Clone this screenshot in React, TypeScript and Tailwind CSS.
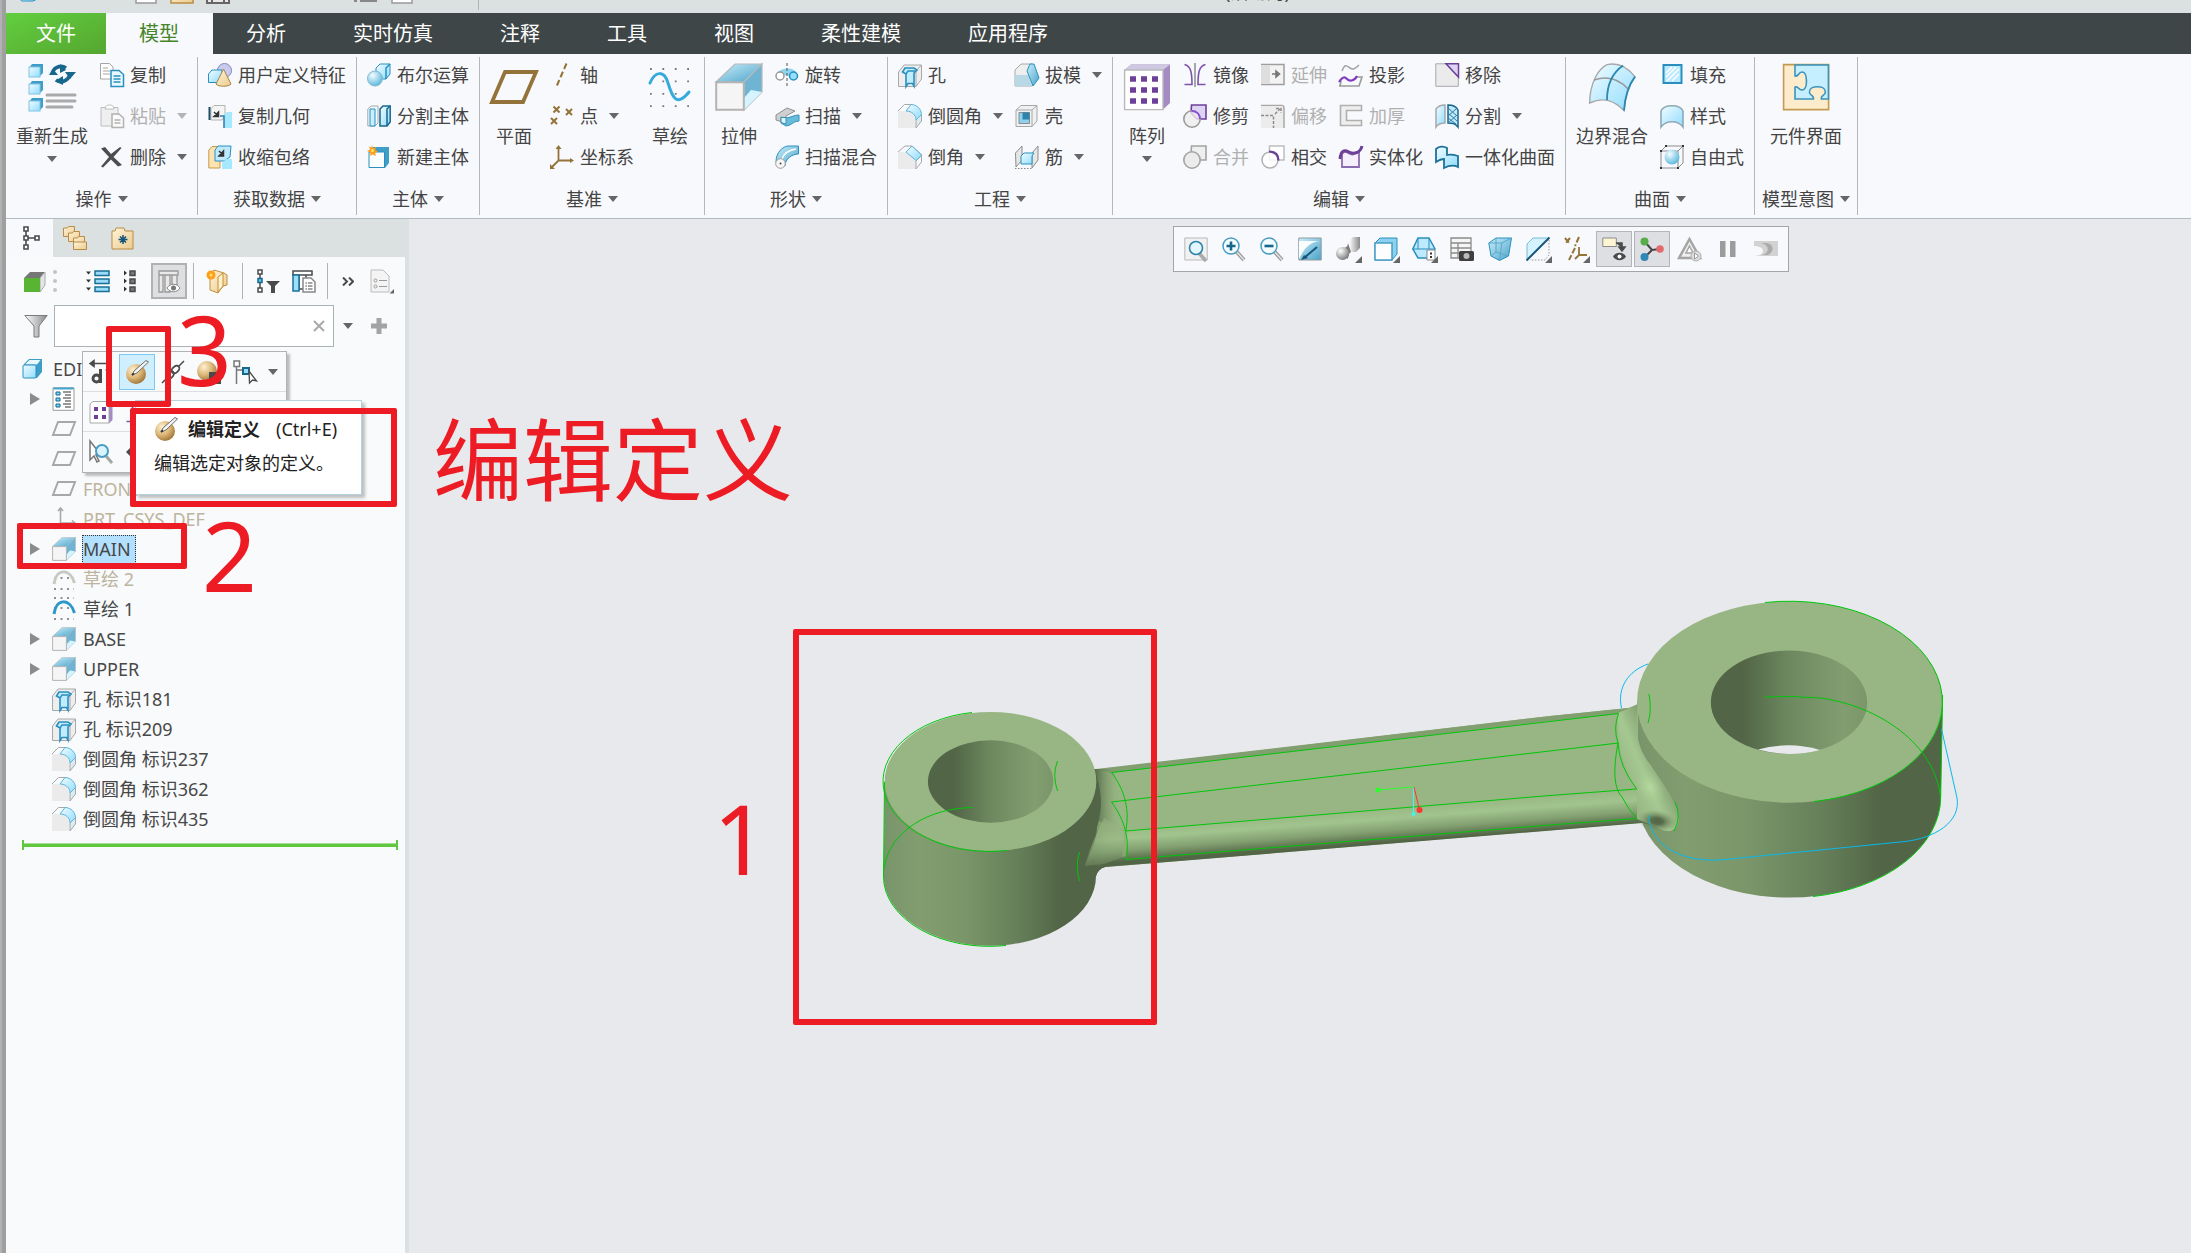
import { useState } from 'react';
import type { ReactNode } from 'react';
import { clsx } from 'clsx';

const BLUE = '#2a8fbf';
const GRAY = '#a6a8aa';
const PURPLE = '#6c3f98';
const BROWN = '#94733a';
const DARK = '#4a4a4a';

// Shared gradients, referenced by every icon on the page
function Gradients() {
  return (
    <svg className="absolute size-0" aria-hidden="true">
      <defs>
        <linearGradient id="ice" x1="0" y1="0" x2="1" y2="1">
          <stop offset="0" stopColor="#f2fcff" />
          <stop offset="1" stopColor="#8fdcff" />
        </linearGradient>
        <linearGradient id="deep" x1="0" y1="0" x2="1" y2="1">
          <stop offset="0" stopColor="#c9eefb" />
          <stop offset="1" stopColor="#4ba3c9" />
        </linearGradient>
        <radialGradient id="ball" cx="0.35" cy="0.3" r="0.8">
          <stop offset="0" stopColor="#f4fcff" />
          <stop offset="1" stopColor="#4fb2d9" />
        </radialGradient>
        <radialGradient id="gold" cx="0.35" cy="0.3" r="0.8">
          <stop offset="0" stopColor="#fff1d2" />
          <stop offset="0.5" stopColor="#dcb777" />
          <stop offset="1" stopColor="#94692a" />
        </radialGradient>
        <radialGradient id="steel" cx="0.35" cy="0.3" r="0.8">
          <stop offset="0" stopColor="#ffffff" />
          <stop offset="1" stopColor="#6f6f6f" />
        </radialGradient>
        <linearGradient id="sand" x1="0" y1="0" x2="1" y2="1">
          <stop offset="0" stopColor="#fff4d8" />
          <stop offset="1" stopColor="#ecca8e" />
        </linearGradient>
        <linearGradient id="funnel" x1="0" y1="0" x2="1" y2="0">
          <stop offset="0" stopColor="#ffffff" />
          <stop offset="1" stopColor="#8a8a8a" />
        </linearGradient>
      </defs>
    </svg>
  );
}

const extrude = (
  <>
    <path d="M.5 9.5 10 .5h13.500l-9 9z" fill="url(#deep)" stroke="#b5b9bb" strokeWidth=".6" />
    <path d="M23.500.500v14l-9 9v-14z" fill="#6fb5d3" stroke="#b5b9bb" strokeWidth=".6" />
    <path d="M23.500 14.500 14.500 23.500v-6l3.500-4z" fill="#d5f4ff" />
    <path d="M.6 9.600h13.800v13.800H.600z" fill="#f5f5f5" stroke="#b3b3b3" />
  </>
);

const hole = (
  <>
    <path d="M.5 9 6 2h17.500v14L18 23.500H.500z" fill="#eeeeee" stroke={GRAY} />
    <path d="M18 7.500v16M23.500 2 18 8" fill="none" stroke={GRAY} />
    <path d="M4.500 9 7 5h9l3 2-3 3v13l-1.500-2.500H10L8 23.500V11z" fill="#bfecff" stroke={BLUE} strokeWidth="1.600" />
    <path d="M8 11 10 8h7" fill="none" stroke={BLUE} strokeWidth="1.400" />
  </>
);

const round = (
  <>
    <path d="M0 7h8c6 0 9 5 9 9v8H0z" fill="#ebebeb" />
    <path d="M18 16v8l5.500-7v-7z" fill="#dcebf1" />
    <path d="M0 7 6.500.500H13l-5 6.500z" fill="#f7fbfd" />
    <path d="m8 7 5-6.500c6 0 10.500 5 10.500 10L18 16c0-5-4-9-10-9z" fill="url(#ice)" />
    <path d="M13 .500c6 0 10.500 5 10.500 10L18 16c0-5-4-9-10-9l5-6.500" fill="none" stroke="#5fb4d6" />
    <path d="M0 7 6.500.500H13M18 16v8l5.500-7v-7" fill="none" stroke={GRAY} />
  </>
);

const cube = (
  <>
    <path d="M4 7 9 2h13v13l-5 6H4z" fill="#3f9ec8" />
    <path d="M5 7.500 9.500 3h11L17 7.500z" fill="#e9faff" />
    <rect x="3" y="8" width="13" height="13" rx="1" fill="url(#ice)" stroke={BLUE} />
  </>
);

const sphereEdit = (
  <>
    <circle cx="11" cy="14" r="10" fill="url(#gold)" />
    <path d="M7 15 9 11 21 .500 23.500 2 12 13z" fill="#f2f2f2" stroke="#6b6b6b" />
    <path d="m7 15 2-1.500" stroke="#333" strokeWidth="2" />
  </>
);

const sketch = (color: string) => (
  <>
    <path d="M2 1h20M2 11h20M2 22h20" stroke="#8d9194" strokeWidth="2" strokeDasharray="2 4.500" />
    <path d="M2 17C4 1 18 1 22.500 16" fill="none" stroke={color} strokeWidth="3" />
  </>
);

const plane = <path d="M6 5h17l-5 13H1z" fill="none" stroke={GRAY} strokeWidth="2" />;

const magnifier = (sign: ReactNode) => (
  <>
    <path d="m14 14 8 9" stroke="#9b9b9b" strokeWidth="4" />
    <path d="m14 14 8 9" stroke="#e2e2e2" strokeWidth="1.500" />
    <circle cx="9" cy="9" r="8" fill="#f3fcff" stroke="#4a9cc3" strokeWidth="1.500" />
    {sign}
  </>
);

const corner = <path d="M26 19v7h-7z" fill="#666" />;

const ICONS: Record<string, ReactNode> = {
  regen: (
    <>
      {[1, 9.500, 18].map((y) => (
        <g key={y}>
          <path d={`M.500 ${y + 1.500} 2 ${y - 0.500}h5.500v4.500L6 ${y + 5.500}z`} fill="#3f9ec8" />
          <rect x=".500" y={y + 1} width="5.500" height="5" fill="url(#ice)" stroke="#7fc4e2" strokeWidth=".500" />
        </g>
      ))}
      <path d="M12 6a4.500 4.500 0 0 1 7-3.500M21 4.500a4.500 4.500 0 0 1-7 4" fill="none" stroke="#17678d" strokeWidth="1.800" />
      <path d="M10.500 6h4.500l-2.500-3zM18.500 4.500H24L21 8zM16 .500v4.500l3-1.500zM17.500 6.500v4.500l-4-2z" fill="#17678d" />
      <path d="M9.500 16h14M9.500 19h14M9.500 22h12.500" stroke="#a9a9a9" strokeWidth="1.500" strokeLinecap="round" />
    </>
  ),
  copy: (
    <>
      <path d="M.5.500h9L13 4v12H.500z" fill="#fff" stroke="#a5a5a5" />
      <path d="M3 5h5M3 8h7M3 11h7" stroke="#a5a5a5" />
      <path d="M11 7.500h8l4.500 4V23.500H11z" fill="#e8f8ff" stroke={BLUE} strokeWidth="1.500" />
      <path d="M13.500 13h7M13.500 16h7M13.500 19h7" stroke={BLUE} strokeWidth="1.500" />
    </>
  ),
  paste: (
    <>
      <path d="M1 3.500h17V22H1z" fill="#efefef" stroke="#bdbdbd" />
      <path d="M5 5c0-3 2-4 4.500-4S14 2 14 5z" fill="#fff" stroke="#bdbdbd" />
      <path d="M12 10h7l4.500 4v9.500H12z" fill="#fafafa" stroke="#b1b1b1" strokeWidth="1.500" />
      <path d="M14.500 16h6M14.500 19h6" stroke="#b1b1b1" strokeWidth="1.500" />
    </>
  ),
  remove: <path d="M1 3.500 5 2l6 7 9-7 1.500 1L13.500 12 22 20l-4 1.500-7-7-8 8-2-1L9 12z" fill="#4d4d4d" />,
  udf: (
    <>
      <circle cx="16.500" cy="7.500" r="7" fill="#c9cbee" stroke="#8487bb" />
      <path d="M.5 11 4 7h10v9l-3 3.500H.500z" fill="url(#ice)" stroke={BLUE} />
      <path d="M15.500 6 8 21c2 3 13 3 15 0z" fill="url(#sand)" stroke="#a88447" />
    </>
  ),
  copyGeom: (
    <>
      <path d="M3 4.500 6 1.500h11v10L14 16H3z" fill="#f4f4f4" stroke="#b5b5b5" />
      <path d="M1.500 3v13" stroke="#1e4d66" strokeWidth="2" />
      <path d="m6 8 4 4M10.500 8v4.500H6z" stroke="#333" strokeWidth="1.500" fill="#333" />
      <path d="M16 24V11l3-3h5v16z" fill="#a6e9ff" />
      <path d="M12 12h4v12" fill="none" stroke="#2a7da6" strokeWidth="1.500" />
    </>
  ),
  shrink: (
    <>
      <path d="M.8 5 4 1.500h8V23H.800z" fill="#fbe2b0" stroke="#c79a4a" />
      <path d="M7 5 10 1h13l-1 11-6 4H7z" fill="#bdeaff" stroke={BLUE} />
      <path d="m11 6 4 4M15.500 6v5H11z" stroke="#333" strokeWidth="1.500" fill="#333" />
      <path d="m14 18 4-4h6v10H14z" fill="#a6e9ff" />
    </>
  ),
  boolean: (
    <>
      <path d="M9 5 13 1h10v10l-4 5H9z" fill="url(#ice)" stroke={BLUE} />
      <path d="M19 16V5l4-4" fill="none" stroke={BLUE} strokeWidth="1.500" />
      <circle cx="8" cy="15.500" r="7.500" fill="url(#ball)" stroke="#7fb9d2" />
    </>
  ),
  splitBody: (
    <>
      <path d="M.8 5 4 2h7v17l-3 3H.800z" fill="#f1fafd" stroke={GRAY} />
      <path d="M3 22V5h5v17z" fill="#c7efff" stroke={BLUE} />
      <path d="M13 5 16 2h7.200v16L20 22h-7z" fill="url(#ice)" stroke="#17678d" strokeWidth="1.500" />
      <path d="M20 22V5l3-3" fill="none" stroke="#17678d" strokeWidth="1.500" />
    </>
  ),
  newBody: (
    <>
      <path d="M2 7 6 2h16v16l-4 5H2z" fill="#3f9ec8" />
      <path d="M2 7h15.500v15.500H2z" fill="#fafdfe" stroke={BLUE} />
      <path d="m5 0 1.200 3.300L9.500 2 8 5l3 1.500L8 8l1 3-3.500-1.500L3 11l.500-3.500L0 6l3-1.500L2 1.500l2.500 1z" fill="#ff9d1c" />
      <circle cx="5.500" cy="5.500" r="1.500" fill="#ffe46b" />
    </>
  ),
  bigPlane: <path d="M7.500 4.500h15.500l-6.500 15H1z" fill="none" stroke={BROWN} strokeWidth="1.900" />,
  axis: <path d="m16.500.500-10 23" stroke={BROWN} strokeWidth="2" strokeDasharray="6 3" />,
  points: (
    <path
      d="m3.500 2.500 6 6m0-6-6 6M16 5l6 6m0-6-6 6M1 14l6 6m0-6-6 6"
      stroke={BROWN}
      strokeWidth="2"
    />
  ),
  csys: (
    <>
      <path d="M8.500 2v13.500H22M8.500 15.500l-7 7" fill="none" stroke={BROWN} strokeWidth="1.800" />
      <path d="m5.500 4 3-4 3 4zM20 13l4 2.500-4 2.500zM0 19v5h5z" fill={BROWN} />
    </>
  ),
  bigSketch: (
    <>
      <path d="M2 3h21M2 9.200h21M2 15.400h21M2 21.600h21" stroke="#777" strokeWidth=".9" strokeDasharray=".9 5.300" />
      <path d="M2 10c2.500-6 7-6.500 9 0s4 12.500 10.500 4.500" fill="none" stroke="#36aadd" strokeWidth="1.500" strokeLinecap="round" />
    </>
  ),
  extrude,
  revolve: (
    <>
      <path d="M2 12C3 4 20 3 22 11l-5 2-10-1z" fill="#8ed4ef" />
      <path d="M12 0v24" stroke="#555" strokeDasharray="3 2" />
      <circle cx="5" cy="13" r="4" fill="#fff" stroke="#999" strokeWidth="1.500" />
      <circle cx="18.500" cy="13" r="4" fill="#93e0ff" stroke={BLUE} strokeWidth="1.500" />
    </>
  ),
  sweep: (
    <>
      <path d="M1 11 12 4l8 3-9 5v7l-10-3z" fill="#cfcfcf" stroke="#8f8f8f" />
      <path d="M6 13c7 3 11-2 18-2v6c-6 0-8 5-13 5l-5-3z" fill="#66bcdd" stroke="#3c8fb3" />
      <path d="M6 13.500h5V20l-5-1.500z" fill="#ddf5ff" stroke="#3c8fb3" />
    </>
  ),
  sweepBlend: (
    <>
      <path d="M1 17C1 7 8 1 14 1h9.500v8C17 9 10 14 10 21z" fill="url(#deep)" stroke={BLUE} />
      <path d="M7 14C9 8 14 5 21 4" fill="none" stroke="#fff" strokeWidth="1.500" />
      <circle cx="5.500" cy="18.500" r="4.800" fill="#f7f7f7" stroke="#999" />
      <circle cx="5.500" cy="18.500" r="1" fill="#444" />
    </>
  ),
  hole,
  round,
  chamfer: (
    <>
      <path d="M0 7h8l10 9v8H0z" fill="#ebebeb" />
      <path d="M0 7 7 1h7l10 9-6 6v8M23.500 10v7L18 24" fill="none" stroke={GRAY} />
      <path d="m14 1 9.500 9L18 15.500 8 7z" fill="url(#ice)" stroke="#5fb4d6" />
    </>
  ),
  draft: (
    <>
      <path d="M0 7 6 1h11l6 15-6 7H0z" fill="#eeeeee" stroke={GRAY} />
      <path d="M0 23V12h13l4 11z" fill="#b8d8e6" />
      <path d="M15 1h4l5 14-6 8L12 8z" fill="url(#deep)" stroke={BLUE} />
    </>
  ),
  shell: (
    <>
      <path d="M1 6 6 1.500h16V17l-5 5.500H1z" fill="#f0f0f0" stroke={GRAY} />
      <path d="M1 6h16v16.500M17 6l5-4.500" fill="none" stroke={GRAY} />
      <path d="M4 8.500h10.500v11H4z" fill="#8ed1ee" stroke="#8a8a8a" />
      <path d="M7.500 8.500h7v7h-7z" fill="#2c83ab" />
    </>
  ),
  rib: (
    <>
      <path d="M.5 8 7 1v14l-6 7zM17 8l6-7v14l-6 8z" fill="#e6e6e6" stroke="#8c8c8c" />
      <path d="m6 11 3-3h10l-2 3v8H6z" fill="url(#ice)" stroke={BLUE} />
      <path d="M0 23.500h17" stroke="#888" strokeDasharray="1.500 1.500" />
    </>
  ),
  pattern: (
    <>
      <path d="M.8 3.500 4 .800h19.500V20L20 23.300V3.500z" fill="#a58bc4" />
      <path d="M.8 3.500 4 .800h19.500L20 3.500z" fill="#cfc8e2" />
      <path d="M.8 3.500H20v19.800H.800z" fill="#fff" stroke="#bababa" strokeWidth=".7" />
      {[8, 13.500, 19].map((y) => (
        <path key={y} d={`M3.500 ${y}h3M9 ${y}h3M14.500 ${y}h3`} stroke={PURPLE} strokeWidth="2.800" />
      ))}
    </>
  ),
  mirror: (
    <>
      <path d="M1.500 1.500C8 3 9 10 9 21.500H1.500M22.500 1.500C16 3 15 10 15 21.500h7.500" fill="none" stroke="#7d54ac" strokeWidth="1.600" />
      <path d="M12 0v24" stroke="#8c8c8c" strokeWidth="1.500" />
    </>
  ),
  trim: (
    <>
      <path d="M8.500 1H23v14h-9l-6-6z" fill="#ddd3f5" stroke={PURPLE} strokeWidth="1.600" />
      <circle cx="9" cy="15" r="8.200" fill="#eeeeee" fillOpacity=".8" stroke="#999" strokeWidth="1.600" />
      <path d="M8.500 7c5 0 8.500 3 8.500 8" fill="none" stroke="#8b4fd0" strokeWidth="2" />
    </>
  ),
  merge: (
    <>
      <path d="M8.500 1H23v14h-7L8 9z" fill="#efefef" stroke="#a3a3a3" strokeWidth="1.600" />
      <circle cx="9" cy="15" r="8.200" fill="#ececec" stroke="#a3a3a3" strokeWidth="1.600" />
    </>
  ),
  extend: (
    <>
      <path d="M0 1.500h23V21.500H0" fill="#f3f3f3" stroke="#9e9e9e" strokeWidth="1.500" />
      <path d="M0 2h9v19H0z" fill="#dedede" />
      <path d="M11 11h7M15 8l3.500 3-3.500 3z" stroke="#777" strokeWidth="1.600" fill="#777" />
    </>
  ),
  offset: (
    <>
      <path d="M0 1.500h21q2 0 2 3V24" fill="#ececec" stroke="#a8a8a8" strokeWidth="1.500" />
      <path d="M0 2h22v22H0z" fill="#ececec" />
      <path d="M0 11.500h12.500V24M14 10l5-5M15 4.500h5V9" fill="none" stroke="#8d8d8d" strokeWidth="1.500" strokeDasharray="3 1.500" />
    </>
  ),
  intersect: (
    <>
      <path d="M8.500 1H23v14H8.500z" fill="#fff" stroke="#bdbdbd" strokeWidth="1.500" />
      <circle cx="9" cy="15" r="8" fill="#fff" fillOpacity=".8" stroke="#b0b0b0" strokeWidth="1.500" />
      <path d="M8 6.500c6 0 9.500 3 9.500 9" fill="none" stroke={PURPLE} strokeWidth="2.200" />
    </>
  ),
  project: (
    <>
      <path d="M3 8c3-8 5-5 8-3s5 1 9-3" fill="none" stroke="#a3a3a3" strokeWidth="1.600" />
      <path d="M1 23 2 18M17 14h6l-3 9H0" fill="none" stroke="#9b9b9b" strokeWidth="1.600" />
      <path d="M0 19c4-6 6-5 8-3s7 3 10-3" fill="none" stroke="#8139bf" strokeWidth="2.200" />
    </>
  ),
  thicken: (
    <path d="M1.500 1.500h21v5H7.500v10h15v5h-21z" fill="#efefef" stroke="#b0b0b0" strokeWidth="1.600" />
  ),
  solidify: (
    <>
      <path d="M3 9c4-6 8 3 12 0l5-3v16H3z" fill="#f4effa" stroke="#8b6bb0" strokeWidth="1.800" />
      <path d="M1 14C2 4 6 5 10 7s11 2 13-6" fill="none" stroke={PURPLE} strokeWidth="3" />
    </>
  ),
  removeSurf: (
    <>
      <path d="M.8.800h22.500v22.500H.800z" fill="#ebebeb" stroke={GRAY} />
      <path d="M11 .800h12.500V14z" fill="#ddd3f5" stroke={PURPLE} strokeWidth="1.500" />
    </>
  ),
  splitSurf: (
    <>
      <path d="M1 5c2-3 5-4 9-4v18c-4 0-7 1-9 4z" fill="url(#ice)" stroke={GRAY} strokeWidth="1.500" />
      <path d="M13 1c5 0 8 1 10 5v17c-3-4-6-4-10-4z" fill="#bfe9fa" stroke="#17678d" strokeWidth="1.500" />
      <path d="m13 4 9 8m-9-3 9 8m-9-3 8 6m0-15-8 7m9-1-9 8" stroke="#2a7da6" />
    </>
  ),
  unify: (
    <path
      d="M1 4c3-3 8-3 11-1v7c4-1 8 0 11 1v11c-4-2-10-1-14 1v-9c-3 0-5 1-8 3z"
      fill="url(#ice)"
      stroke="#1c7199"
      strokeWidth="1.800"
    />
  ),
  boundary: (
    <>
      <path d="M.8 20C1 10 5 3 9.500.800c5-1 10 1 14 6-3 4-5 10-5.500 17-5-5-10-7-17.200-3.800z" fill="url(#ice)" stroke={GRAY} strokeWidth=".7" />
      <path d="M3 8.500c6-2 12-1 17 4.500" fill="none" stroke="#999" strokeWidth=".8" />
      <path d="M17.500 1.200C12 5 9.500 11 9.500 18.500M23.500 6.800c-3 4-5 10-5.500 17" fill="none" stroke="#2b86b2" strokeWidth=".9" />
    </>
  ),
  fill: (
    <>
      <path d="M3.500 2h18v18h-18z" fill="#b9eaff" stroke="#2a8fbf" strokeWidth="2" />
      <path d="m6 10 6-6M6 14 16 4M7 18 19 6M12 18l7-7" stroke="#fff" strokeWidth="1.500" />
    </>
  ),
  style: (
    <path d="M1 7C4 0 20 0 23 7v16c-5-7-17-7-22 0z" fill="url(#ice)" stroke="#8fa9b5" strokeWidth="1.600" />
  ),
  freestyle: (
    <>
      <path d="M1 6 6 1h17v17l-5 5H1zM1 6h17v17M18 6l5-5" fill="none" stroke="#8c8c8c" />
      <circle cx="12" cy="12" r="7.500" fill="url(#ball)" />
      <path d="M0 5h2v2H0zM5 0h2v2H5zM22 0h2v2h-2zM17 22h2v2h-2zM0 22h2v2H0z" fill="#333" />
    </>
  ),
  puzzle: (
    <>
      <path d="M.8.800h22.500v22.500H.800z" fill="#fdeccb" stroke="#c39b50" strokeWidth=".8" />
      <path
        d="M6.500 1h16.700v17h-3.500c-.500-2 2-1.500 2-3.500 0-3.500-8-3.500-8 0 0 2 2.500 1.500 2 3.500H6.500v-6c2-.500 1.500 1.500 3.500 1.500 3 0 3-9 0-9C8 4.500 8.500 7 6.500 6.500z"
        fill="#c5efff"
        stroke="#3b93bd"
        strokeWidth=".8"
      />
    </>
  ),
  tree: (
    <path
      d="M1 1h4v4H1zM1 10h4v4H1zM1 19h4v4H1zM12 10h4v4h-4zM3 5v5M3 14v5M5 12h7"
      fill="#fff"
      stroke={DARK}
      strokeWidth="1.600"
    />
  ),
  folders: (
    <>
      {[0, 5, 10].map((d) => (
        <path key={d} d={`M${d + 0.500} ${d + 2}h4l1-1.500h6v10h-11z`} fill="url(#sand)" stroke="#b98d45" />
      ))}
      <path d="M10.500 16h13v7.500h-13z" fill="url(#sand)" stroke="#b98d45" />
    </>
  ),
  starFolder: (
    <>
      <path d="M1 5h3l1-3h8l1 3h8v18H1z" fill="url(#sand)" stroke="#b98d45" />
      <path d="M12 9v9M7.500 13.500h9M9 10.500l6 6M15 10.500l-6 6" stroke="#16567a" strokeWidth="1.500" />
    </>
  ),
  greenCube: (
    <>
      <path d="M2 9 8 3h15l-5 6z" fill="#777" />
      <path d="M18 9l5-6v13l-5 7z" fill="#e5e5e5" stroke={GRAY} />
      <path d="M2 9h16v14H2z" fill="#57b531" />
    </>
  ),
  expandAll: (
    <>
      <path d="M9 2h14v4.500H9zM9 10h14v4.500H9zM9 18h14v4.500H9z" fill="#97dcf8" stroke="#1b6f97" strokeWidth="1.500" />
      <path d="M0 2.500h5L2.500 5.500zM0 10.500h5l-2.500 3zM0 18.500h5l-2.500 3z" fill="#333" />
    </>
  ),
  collapseAll: (
    <>
      <path d="M8 2h5v4.500H8zM8 10h5v4.500H8zM8 18h5v4.500H8z" fill="#777" stroke={DARK} strokeWidth="1.500" />
      <path d="M2 1.500v5l3-2.500zM2 9.500v5L5 12zM2 17.500v5L5 20z" fill="#333" />
    </>
  ),
  columns: (
    <>
      <path d="M2 2h19v4H2zM2 6h4v17H2zM8 6h5v17H8zM15 6h5v10h-5z" fill="#e9e9e9" stroke="#999" strokeWidth="1.300" />
      <path d="M10 19c3-5 10-5 13 0-3 5-10 5-13 0z" fill="#fff" stroke="#888" />
      <circle cx="16.500" cy="19" r="2.500" fill="#777" />
    </>
  ),
  newBook: (
    <>
      <path d="M4 6 8 1l10 3 3 2v10l-4 1-5 7-8-3z" fill="url(#sand)" stroke="#c08f3c" />
      <path d="m12 8 5-4v13l-5 6z" fill="#fff1cb" stroke="#c08f3c" />
      <circle cx="5" cy="6" r="4.500" fill="#ff9d1c" />
      <circle cx="5" cy="6" r="1.500" fill="#ffe46b" />
    </>
  ),
  treeFilter: (
    <>
      <path d="M2 1h4v4H2zM2 19h4v4H2zM4 5v14" fill="#fff" stroke={DARK} strokeWidth="1.500" />
      <path d="M2 9.500h4v4H2z" fill="#62c8f2" stroke="#17678d" strokeWidth="1.500" />
      <path d="M10 12h14l-5 5v7h-4v-7z" fill={DARK} />
    </>
  ),
  treeColumns: (
    <>
      <path d="M1 2h19v4H1zM7 6h7v14H7z" fill="#fff" stroke={DARK} strokeWidth="1.500" />
      <path d="M1 6h6v16H1z" fill="#9be0fb" stroke="#1b6f97" strokeWidth="1.500" />
      <path d="M11 9h8l4 4v10H11z" fill="#fff" stroke="#888" strokeWidth="1.500" />
      <path d="M13.500 14h7M13.500 17h7M13.500 20h7" stroke={DARK} strokeDasharray="1.500 1 6 0" />
    </>
  ),
  sheet: (
    <>
      <path d="M1 1h12l6 6v16H1z" fill="#f4f4f4" stroke="#bcbcbc" />
      <circle cx="5.500" cy="11.500" r="1.500" fill="none" stroke="#999" />
      <circle cx="5.500" cy="17.500" r="1.500" fill="none" stroke="#999" />
      <path d="M9 11.500h8M9 17.500h8" stroke="#999" />
      <path d="M24 20v4.500h-4.500z" fill="#666" />
    </>
  ),
  funnel: <path d="M.8 1.500h22.400L15 12v11H10V12z" fill="url(#funnel)" stroke="#7b7b7b" />,
  cube,
  design: (
    <>
      <path d="M1 .800h21v22.500H1z" fill="#fff" stroke="#9a9a9a" />
      <path d="M1.500 1.500h20" stroke="#43a5d0" strokeWidth="2" />
      <path d="M4 5h4v3H4zM4 11h4v3H4zM4 17h4v3H4z" fill="#7fd0f2" stroke="#17678d" />
      <path d="M11 5h8M13 8h6M11 11h8M13 14h6M11 17h8M13 20h6" stroke="#777" strokeWidth="1.300" />
    </>
  ),
  plane,
  csysGray: <path d="M8.500 1v15H22M8.500 16l-6 6M6 4l2.500-3L11 4M20 13.500l3 2.500-3 2.500" fill="none" stroke={GRAY} strokeWidth="1.600" />,
  sketchGray: sketch('#c9c9c4'),
  sketchBlue: sketch('#2c97cb'),
  dim: (
    <>
      <path d="M1 3.500h22M1 3.500l4-3v6zM22 0v7" stroke={DARK} strokeWidth="1.500" fill={DARK} />
      <path d="M11.500 9v14M17 11l3.500-2v14" fill="none" stroke={DARK} strokeWidth="3" />
      <circle cx="7.500" cy="18.500" r="3.500" fill="none" stroke={DARK} strokeWidth="2.800" />
    </>
  ),
  sphereEdit,
  chain: (
    <>
      <path d="m1 23 6-6M17 7l6-6" stroke={DARK} strokeWidth="1.500" />
      <ellipse cx="9" cy="15" rx="4.500" ry="3" transform="rotate(-45 9 15)" fill="none" stroke={DARK} strokeWidth="1.800" />
      <ellipse cx="14.500" cy="9.500" rx="4.500" ry="3" transform="rotate(-45 14.500 9.500)" fill="none" stroke={DARK} strokeWidth="1.800" />
    </>
  ),
  sphereHide: (
    <>
      <circle cx="10" cy="11" r="10" fill="url(#gold)" />
      <path d="M12 12h12v12H12z" fill={DARK} />
    </>
  ),
  selectTree: (
    <>
      <path d="M1 1h5.500v5.500H1zM3.500 6.500V24M3.500 10H10" fill="#fff" stroke="#777" strokeWidth="1.500" />
      <path d="M10 8h6v6h-6z" fill="#8fdcff" stroke="#17678d" strokeWidth="2" />
      <path d="m16 11 .500 12 3-3 4 1z" fill="#fff" stroke={DARK} strokeWidth="1.300" />
    </>
  ),
  patternSmall: (
    <>
      <path d="M20 5 23.500 2v18L20 23.500z" fill="#a58bc4" />
      <path d="M1 4 4 1.500h19.500L20 4v19H1z" fill="#fff" stroke={GRAY} />
      <path d="M5 9h4M13 9h4M5 17h4M13 17h4" stroke={PURPLE} strokeWidth="4" />
    </>
  ),
  zoomSelect: (
    <>
      <path d="M1 1v19l4-4 3 6 2-1-3-6h5z" fill="#fff" stroke="#777" strokeWidth="1.500" />
      <path d="m17 16 6 7" stroke="#a5a5a5" strokeWidth="3" />
      <circle cx="13" cy="11" r="6" fill="#d9f4ff" stroke="#4a9cc3" strokeWidth="2" />
    </>
  ),
  arrowLeft: <path d="m1 12 8-8v16z" fill={DARK} />,
  refit: (
    <>
      <path d="M.8 1h22.400v22H.800z" fill="#f1f1f1" stroke="#b9b9b9" />
      <path d="m15 16 7 8" stroke="#aaa" strokeWidth="3.500" />
      <circle cx="12" cy="11" r="6.500" fill="#e4f7ff" stroke="#2c83ab" strokeWidth="1.600" />
    </>
  ),
  zoomIn: magnifier(<path d="M9 4.500v9M4.500 9h9" stroke="#17678d" strokeWidth="2.600" />),
  zoomOut: magnifier(<path d="M4.500 9h9" stroke="#17678d" strokeWidth="2.600" />),
  repaint: (
    <>
      <path d="M.8 1h22.400v22H.800z" fill="url(#deep)" stroke="#8e9a9f" />
      <path d="M1 4h21c-11 1-16 8-21 18z" fill="#fafdfe" />
      <path d="m6 21 13-11" stroke="#17567a" strokeWidth="2" />
      <path d="m3 23 3-5 4 3z" fill="#17567a" />
    </>
  ),
  shading: (
    <>
      <path d="m13 4 4-4h7v11l-4 4h-7z" fill="url(#funnel)" />
      <path d="M12 6c0 3-2 5-5 5l4 11c2-1 1-5 4-7z" fill="#7c7c7c" />
      <circle cx="6.500" cy="16.500" r="6.500" fill="url(#steel)" />
      {corner}
    </>
  ),
  displayStyle: (
    <>
      <path d="M1 6 6 1h17v16l-5 6H1z" fill="#8bd2f0" stroke={BLUE} />
      <path d="M1 6h17v17H1z" fill="#fbfdff" stroke="#4a9cc3" strokeWidth="1.500" />
      {corner}
    </>
  ),
  savedViews: (
    <>
      <path d="M6 1h11l6 11-6 9H6L.800 12z" fill="#bdeaff" stroke={BLUE} strokeWidth="1.500" />
      <path d="M.8 12h22M6 12V1M17 12v-11" fill="none" stroke={BLUE} />
      <path d="M15 13h8v10h-8z" fill="#fff" stroke="#888" />
      <path d="M19 15.500v2M19 19v2" stroke="#333" strokeWidth="2" />
      {corner}
    </>
  ),
  snapshot: (
    <>
      <path d="M1 1h20v20H1zM1 6h20M1 11h20M1 16h20M8 6v15" fill="#f5f5f5" stroke="#8a8a8a" strokeWidth="1.300" />
      <rect x="9" y="14" width="15" height="10" rx="1.500" fill="#3f3f3f" />
      <circle cx="16.500" cy="19" r="3" fill="#bbb" />
    </>
  ),
  perspective: (
    <>
      <path d="M.8 6 8 1h15.500l-3 18-9 4.500L3 19z" fill="url(#deep)" stroke={BLUE} />
      <path d="M.8 6h13l9.700-5M13.800 6l-2.300 17.500M8 1v14l12 4M8 15l-5 4" fill="none" stroke="#5aa8ca" />
    </>
  ),
  section: (
    <>
      <path d="M1 7 7 1h16L1 23z" fill="#d5f3ff" stroke="#79bad6" />
      <path d="M23 3v15l-4 5H4" fill="none" stroke="#999" strokeDasharray="1.500 1.500" />
      <path d="M23.500.500.500 23.500" stroke="#17567a" strokeWidth="2" />
      {corner}
    </>
  ),
  datumDisplay: (
    <>
      <path d="m1 1 5 6M6 1 1 7M15 0 11 9M11 11 5 23" stroke={BROWN} strokeWidth="2" strokeDasharray="6 2" />
      <path d="M15 10v8h8M15 18l-4 4" fill="none" stroke={BROWN} strokeWidth="1.800" />
      {corner}
    </>
  ),
  annotation: (
    <>
      <path d="M.8 1h13.500v8.500H.800z" fill="#fff5d4" stroke="#8b8b8b" />
      <path d="M14 6h6v5M17 10h6l-3 4z" fill={DARK} stroke={DARK} strokeWidth="1.600" />
      <path d="M11 19.500c3-5 10-5 13 0-3 5-10 5-13 0z" fill={DARK} />
      <circle cx="17.500" cy="19.500" r="2" fill="#fff" />
    </>
  ),
  spin: (
    <>
      <path d="m5 5 7 8 8-1M12 13l-7 7" fill="none" stroke="#444" strokeWidth="2" />
      <circle cx="4.500" cy="4.500" r="4" fill="#58ad4b" />
      <circle cx="20" cy="12" r="3.800" fill="#e26a6a" />
      <circle cx="4.500" cy="20" r="4" fill="#2f87b5" />
    </>
  ),
  simulate: (
    <>
      <path d="M11.500 2 22 21H1z" fill="#eee" stroke="#a5a5a5" strokeWidth="2.500" />
      <path d="M11.500 9 15 16H8z" fill="#fff" stroke="#a5a5a5" strokeWidth="1.500" />
      <circle cx="18" cy="19" r="5" fill="#ddd" stroke="#b0b0b0" />
      <path d="m16.500 16 4 3-4 3z" fill="#fff" stroke="#999" />
    </>
  ),
  pause: <path d="M4 4h5.500v16H4zM14 4h5.500v16H14z" fill="#9c9c9c" />,
  playback: (
    <>
      <path d="M0 4h24v15H0c12 0 12-10 0-10z" fill="#d2d2d2" />
      <path d="M5 6c10 0 12 10 3 12h6c7-3 6-12-2-12z" fill="#aaa" />
    </>
  ),
  save: <path d="M1 2h22v21H1zM6 14h12v9H6z" fill="#e8e8e8" stroke="#666" strokeWidth="2" />,
  page: <path d="M2 1h20v22H2z" fill="#fff" stroke="#999" strokeWidth="1.500" />,
  folder: <path d="M1 4h22v19H1z" fill="url(#sand)" stroke="#b98d45" strokeWidth="1.500" />,
  list: <path d="M0 21h3M6 21h17" stroke="#888" strokeWidth="2" />,
};

function Icon({ name, big }: { name: string; big?: boolean }) {
  return (
    <svg viewBox="0 0 24 24" className={clsx('shrink-0 overflow-visible', big ? 'size-12' : 'size-6')} aria-hidden="true">
      {ICONS[name]}
    </svg>
  );
}

function Caret({ dim }: { dim?: boolean }) {
  return (
    <svg viewBox="0 0 10 6" className="w-[10px] h-[6px] shrink-0" aria-hidden="true">
      <path d="M0 0h10L5 6z" fill={dim ? '#b4b4b4' : '#666'} />
    </svg>
  );
}

interface Command {
  icon: string;
  label: string;
  menu?: boolean;
  disabled?: boolean;
}

type Column = Command | Command[];

interface Group {
  title: string;
  columns: Column[];
}

const GROUPS: Group[] = [
  {
    title: '操作',
    columns: [
      { icon: 'regen', label: '重新生成', menu: true },
      [
        { icon: 'copy', label: '复制' },
        { icon: 'paste', label: '粘贴', menu: true, disabled: true },
        { icon: 'remove', label: '删除', menu: true },
      ],
    ],
  },
  {
    title: '获取数据',
    columns: [
      [
        { icon: 'udf', label: '用户定义特征' },
        { icon: 'copyGeom', label: '复制几何' },
        { icon: 'shrink', label: '收缩包络' },
      ],
    ],
  },
  {
    title: '主体',
    columns: [
      [
        { icon: 'boolean', label: '布尔运算' },
        { icon: 'splitBody', label: '分割主体' },
        { icon: 'newBody', label: '新建主体' },
      ],
    ],
  },
  {
    title: '基准',
    columns: [
      { icon: 'bigPlane', label: '平面' },
      [
        { icon: 'axis', label: '轴' },
        { icon: 'points', label: '点', menu: true },
        { icon: 'csys', label: '坐标系' },
      ],
      { icon: 'bigSketch', label: '草绘' },
    ],
  },
  {
    title: '形状',
    columns: [
      { icon: 'extrude', label: '拉伸' },
      [
        { icon: 'revolve', label: '旋转' },
        { icon: 'sweep', label: '扫描', menu: true },
        { icon: 'sweepBlend', label: '扫描混合' },
      ],
    ],
  },
  {
    title: '工程',
    columns: [
      [
        { icon: 'hole', label: '孔' },
        { icon: 'round', label: '倒圆角', menu: true },
        { icon: 'chamfer', label: '倒角', menu: true },
      ],
      [
        { icon: 'draft', label: '拔模', menu: true },
        { icon: 'shell', label: '壳' },
        { icon: 'rib', label: '筋', menu: true },
      ],
    ],
  },
  {
    title: '编辑',
    columns: [
      { icon: 'pattern', label: '阵列', menu: true },
      [
        { icon: 'mirror', label: '镜像' },
        { icon: 'trim', label: '修剪' },
        { icon: 'merge', label: '合并', disabled: true },
      ],
      [
        { icon: 'extend', label: '延伸', disabled: true },
        { icon: 'offset', label: '偏移', disabled: true },
        { icon: 'intersect', label: '相交' },
      ],
      [
        { icon: 'project', label: '投影' },
        { icon: 'thicken', label: '加厚', disabled: true },
        { icon: 'solidify', label: '实体化' },
      ],
      [
        { icon: 'removeSurf', label: '移除' },
        { icon: 'splitSurf', label: '分割', menu: true },
        { icon: 'unify', label: '一体化曲面' },
      ],
    ],
  },
  {
    title: '曲面',
    columns: [
      { icon: 'boundary', label: '边界混合' },
      [
        { icon: 'fill', label: '填充' },
        { icon: 'style', label: '样式' },
        { icon: 'freestyle', label: '自由式' },
      ],
    ],
  },
  { title: '模型意图', columns: [{ icon: 'puzzle', label: '元件界面' }] },
];

const TABS = ['模型', '分析', '实时仿真', '注释', '工具', '视图', '柔性建模', '应用程序'];

const VIEW_TOOLS = [
  'refit', 'zoomIn', 'zoomOut', 'repaint', 'shading', 'displayStyle', 'savedViews', 'snapshot',
  'perspective', 'section', 'datumDisplay', 'annotation', 'spin', 'simulate', 'pause', 'playback',
];

interface TreeItem {
  icon: string;
  label: string;
  expandable?: boolean;
  hidden?: boolean;
}

const TREE: TreeItem[] = [
  { icon: 'design', label: '', expandable: true },
  { icon: 'plane', label: 'RIGHT', hidden: true },
  { icon: 'plane', label: 'TOP', hidden: true },
  { icon: 'plane', label: 'FRONT', hidden: true },
  { icon: 'csysGray', label: 'PRT_CSYS_DEF', hidden: true },
  { icon: 'extrude', label: 'MAIN', expandable: true },
  { icon: 'sketchGray', label: '草绘 2', hidden: true },
  { icon: 'sketchBlue', label: '草绘 1' },
  { icon: 'extrude', label: 'BASE', expandable: true },
  { icon: 'extrude', label: 'UPPER', expandable: true },
  { icon: 'hole', label: '孔 标识181' },
  { icon: 'hole', label: '孔 标识209' },
  { icon: 'round', label: '倒圆角 标识237' },
  { icon: 'round', label: '倒圆角 标识362' },
  { icon: 'round', label: '倒圆角 标识435' },
];

function TitleBar() {
  return (
    <header className="-mt-[29px] h-[42px] flex items-center bg-[#dbe1e0] pl-3">
      <Icon name="cube" />
      <div className="ml-[92px] flex items-center gap-3">
        <Icon name="page" />
        <Icon name="folder" />
        <Icon name="save" />
      </div>
      <div className="ml-[124px] flex items-center gap-3">
        <Icon name="list" />
        <Icon name="page" />
      </div>
      <span className="ml-[64px] h-9 w-px bg-[#aeb4b4]" />
      <span className="ml-[746px] text-lg leading-6">(活动的)</span>
    </header>
  );
}

function SmallCommand({ icon, label, menu, disabled }: Command) {
  return (
    <button disabled={disabled} className={clsx('flex h-6 items-center', disabled && 'text-[#b0b0b0]')}>
      <Icon name={icon} />
      <span className="ml-[6px] leading-6 whitespace-nowrap">{label}</span>
      {menu && <span className="ml-[11px] flex"><Caret dim={disabled} /></span>}
    </button>
  );
}

function BigCommand({ icon, label, menu }: Command) {
  return (
    <button className="flex flex-col items-center self-start">
      <Icon name={icon} big />
      <span className="mt-[13px] leading-6 whitespace-nowrap">{label}</span>
      {menu && <span className="mt-2 flex"><Caret /></span>}
    </button>
  );
}

function Ribbon() {
  return (
    <div className="flex h-[165px] border-b border-[#b0bcbf] bg-[#f8f9fc] py-[3px] text-lg">
      {GROUPS.map((group) => (
        <section key={group.title} className="flex flex-col items-center justify-between border-r border-[#b4b8ba] px-[10px] pt-[6px] pb-1">
          <div className="flex gap-3">
            {group.columns.map((column, i) =>
              Array.isArray(column) ? (
                <div key={i} className="flex flex-col items-start gap-[17px]">
                  {column.map((command) => <SmallCommand key={command.label} {...command} />)}
                </div>
              ) : (
                <BigCommand key={i} {...column} />
              ),
            )}
          </div>
          <button className="-mx-[3px] flex items-center gap-[6px] leading-6 whitespace-nowrap">
            {group.title}
            <Caret />
          </button>
        </section>
      ))}
    </div>
  );
}

function ModelTree() {
  const [selected, setSelected] = useState('MAIN');

  return (
    <ul className="text-lg leading-[30px] text-[#484848]">
      <li className="flex h-[30px] items-center pl-[14px]">
        <Icon name="cube" />
        <span className="ml-[9px]">EDIT</span>
      </li>
      {TREE.map((item, i) => (
        <li key={i} className="flex h-[30px] items-center pl-6">
          <span className="w-[22px] shrink-0">
            {item.expandable && (
              <svg viewBox="0 0 10 12" className="h-3 w-[10px]" aria-hidden="true">
                <path d="M0 0 10 6 0 12z" fill="#8b8b8b" />
              </svg>
            )}
          </span>
          <Icon name={item.icon} />
          <button
            onClick={() => setSelected(item.label)}
            className={clsx(
              'ml-[6px] border border-dotted pr-1 leading-[27px]',
              item.hidden && 'text-[#bdb49d]',
              selected === item.label && item.label ? 'border-[#333] bg-[#b3e0fe]' : 'border-transparent',
            )}
          >
            {item.label}
          </button>
        </li>
      ))}
    </ul>
  );
}

function Sidebar() {
  const [query, setQuery] = useState('');

  return (
    <aside className="w-[403px] shrink-0 border-r-4 border-[#dbe1e0] bg-[#f8fafc]">
      <nav className="flex h-[38px] items-center bg-[#dbe1e0]">
        <button className="flex h-full w-[47px] items-center bg-[#f8f9fc] pl-[17px]"><Icon name="tree" /></button>
        <button className="ml-[10px]"><Icon name="folders" /></button>
        <button className="ml-6"><Icon name="starFolder" /></button>
      </nav>

      <div className="flex h-12 items-center pl-4">
        <button><Icon name="greenCube" /></button>
        <span className="ml-[7px] h-[22px] border-l-4 border-dotted border-[#c4c4c4]" />
        <button className="ml-[29px]"><Icon name="expandAll" /></button>
        <button className="ml-3"><Icon name="collapseAll" /></button>
        <button className="ml-[5px] flex size-9 items-center justify-center border-2 border-[#b0b2b4] bg-[#dddfe1]">
          <Icon name="columns" />
        </button>
        <span className="ml-[6px] h-9 w-px bg-[#b0b2b4]" />
        <button className="ml-3"><Icon name="newBook" /></button>
        <span className="ml-3 h-9 w-px bg-[#b0b2b4]" />
        <button className="ml-[13px]"><Icon name="treeFilter" /></button>
        <button className="ml-3"><Icon name="treeColumns" /></button>
        <span className="ml-[11px] h-9 w-px bg-[#b0b2b4]" />
        <button className="ml-[14px]" aria-label="更多">
          <svg viewBox="0 0 12 9" className="h-[9px] w-3" aria-hidden="true">
            <path d="m1 .500 4 4-4 4M7 .500l4 4-4 4" fill="none" stroke={DARK} strokeWidth="2" />
          </svg>
        </button>
        <button className="ml-4"><Icon name="sheet" /></button>
      </div>

      <div className="flex h-[42px] items-center pl-[18px]">
        <Icon name="funnel" />
        <label className="ml-[6px] flex h-[42px] w-[280px] items-center border border-[#a9b3b5] bg-white pr-2">
          <input
            type="text"
            aria-label="搜索"
            value={query}
            onChange={(e) => setQuery(e.target.value)}
            className="min-w-0 flex-1 px-2 text-lg outline-none"
          />
          <svg viewBox="0 0 12 12" className="size-3" aria-hidden="true">
            <path d="m1 1 10 10M11 1 1 11" stroke="#a9a9a9" strokeWidth="2" />
          </svg>
        </label>
        <button className="ml-[9px] flex" aria-label="选项"><Caret /></button>
        <button className="ml-[18px]" aria-label="添加">
          <svg viewBox="0 0 16 16" className="size-4" aria-hidden="true">
            <path d="M8 0v16M0 8h16" stroke="#a3a3a3" strokeWidth="5" />
          </svg>
        </button>
      </div>

      <div className="pt-[7px]">
        <ModelTree />
        <div className="mt-[6px] mr-[7px] ml-4 flex items-center">
          <span className="h-[10px] w-[2px] bg-[#5fc83f]" />
          <span className="h-1 flex-1 border-t border-[#a9dc98] bg-[#5fc83f]" />
          <span className="h-[10px] w-[2px] bg-[#5fc83f]" />
        </div>
      </div>
    </aside>
  );
}

// Shaded view of the link arm; coordinates are those of the graphics window
function LinkArm() {
  return (
    <svg viewBox="860 590 1120 370" className="absolute top-[371px] left-[451px] h-[370px] w-[1120px]" role="img" aria-label="连杆模型">
      <defs>
        <linearGradient id="side" x1="0" y1="0" x2="1" y2="0">
          <stop offset="0" stopColor="#79946a" />
          <stop offset=".16" stopColor="#829e70" />
          <stop offset=".35" stopColor="#7b976a" />
          <stop offset=".6" stopColor="#66805a" />
          <stop offset=".8" stopColor="#526546" />
          <stop offset="1" stopColor="#526546" />
        </linearGradient>
        <linearGradient id="bore" x1="0" y1="0" x2="1" y2="0">
          <stop offset="0" stopColor="#526546" />
          <stop offset=".2" stopColor="#526546" />
          <stop offset=".5" stopColor="#6d885f" />
          <stop offset=".85" stopColor="#829e70" />
          <stop offset="1" stopColor="#7b966a" />
        </linearGradient>
        <linearGradient id="armEdge" gradientUnits="userSpaceOnUse" x1="1370" y1="808" x2="1373" y2="848">
          <stop offset="0" stopColor="#98b683" />
          <stop offset=".3" stopColor="#a1c48e" />
          <stop offset=".6" stopColor="#829f70" />
          <stop offset=".88" stopColor="#526546" />
          <stop offset="1" stopColor="#526546" />
        </linearGradient>
        <linearGradient id="neck" gradientUnits="userSpaceOnUse" x1="1094" y1="0" x2="1122" y2="0">
          <stop offset="0" stopColor="#526546" />
          <stop offset="1" stopColor="#98b683" stopOpacity="0" />
        </linearGradient>
        <linearGradient id="fillet" gradientUnits="userSpaceOnUse" x1="1618" y1="770" x2="1660" y2="752">
          <stop offset="0" stopColor="#98b683" />
          <stop offset=".5" stopColor="#a5c891" />
          <stop offset="1" stopColor="#7f9b6d" />
        </linearGradient>
        <radialGradient id="shine">
          <stop offset="0" stopColor="#b6d9a1" />
          <stop offset="1" stopColor="#a5c891" stopOpacity="0" />
        </radialGradient>
        <radialGradient id="shade">
          <stop offset="0" stopColor="#526546" />
          <stop offset=".3" stopColor="#5a6e4d" />
          <stop offset="1" stopColor="#7f9b6d" stopOpacity="0" />
        </radialGradient>
      </defs>

      {/* big boss */}
      <path d="M1637 702V797A151 100 0 0 0 1940.700 797L1942.600 702z" fill="url(#side)" />
      <path d="M1600 780H1642V823L1620 824z" fill="#e8e9ed" />
      <path d="M1637 797 1642 823 1600 850V797z" fill="#e8e9ed" />

      {/* arm */}
      <path d="M1090 770 1111 768 1550 716 1628 708 1638 704V823L1155 863 1105 867Q1098 869 1096 876L1070 860z" fill="#98b683" />
      <path d="M1096 769 1550 716 1628 708V713L1550 721 1111 773z" fill="#829f70" />
      <path d="M1080 834 1126 831 1636 789 1652 825 1642 823 1155 863 1105 867Q1098 869 1096 876L1080 868z" fill="url(#armEdge)" />
      <path d="M1090 769H1112C1126 790 1128 815 1126 831L1100 866 1085 866z" fill="url(#neck)" />
      <path d="M1096 820C1100 835 1092 850 1084 866L1104 864 1126 856V831z" fill="#8eac79" fillOpacity=".7" />

      {/* small boss */}
      <path
        d="M884.700 781 883.700 876A106 69.700 0 0 0 1096 876Q1098 869 1105 867L1085 866C1090 845 1099 830 1101 805Q1101 790 1096.300 775z"
        fill="url(#side)"
      />
      <path d="M1085 866C1090 845 1099 830 1104 818L1124 832 1122 860 1105 865z" fill="url(#armEdge)" fillOpacity=".55" />
      <ellipse cx="990.500" cy="781.500" rx="105.800" ry="69.500" fill="#98b683" />
      <ellipse cx="990.600" cy="781.500" rx="62.700" ry="41.200" fill="url(#bore)" />

      {/* fillet into the big boss */}
      <path
        d="M1618 713 1630 708 1638 704C1634 730 1638 750 1650 764 1664 785 1679 805 1679 820 1678 830 1670 833 1662 830L1650 824 1637 819V789C1622 768 1616 740 1618 713z"
        fill="url(#fillet)"
      />
      <ellipse cx="1650" cy="787" rx="13" ry="20" transform="rotate(-25 1650 787)" fill="url(#shine)" />
      <ellipse cx="1657" cy="821" rx="20" ry="11" transform="rotate(8 1657 821)" fill="url(#shade)" />

      <ellipse cx="1789.800" cy="702" rx="152.800" ry="100.700" fill="#98b683" />
      <ellipse cx="1789" cy="702.300" rx="78.200" ry="51.700" fill="url(#bore)" />
      <path d="M1758 749.500Q1789 741 1820 750 1789 758 1758 749.500z" fill="#e8e9ed" />

      <g fill="none" stroke="#00c60a" strokeWidth="1">
        <path d="M972 712.500A105.800 69.500 0 0 0 1007 850.500M884.500 782 883.500 876A106 69.700 0 0 0 1006 945.500" />
        <path d="M884 868C890 830 930 808 973 807.500M1057.500 761Q1052 775 1057.500 791M1079.500 852Q1075 866 1079.500 881" />
        <path d="M1618.500 713.500 1111.500 772.500C1121 785 1131 805 1125.700 831L1550 795.500 1636.700 789" />
        <path d="M1618.500 743 1111.500 802C1121 815 1131 835 1126 859.500L1550 825 1636.700 818.500" />
        <path d="M1618.500 713.500Q1613 728 1618 743 1619 766 1636.700 789M1618 743Q1610 785 1622 797 1628 809 1636.700 818.500" />
        <path d="M1765 602.500A152.800 100.700 0 0 1 1814 801.500M1942.600 695 1940.700 797A151.900 100.700 0 0 1 1813 896.500" />
        <path d="M1764 697Q1792 695.500 1820 698C1880 706 1935 745 1940.500 797M1649 694Q1652 710 1648 723M1675 802Q1682 817 1674 831" />
      </g>
      <g fill="none" stroke="#09b9ea" strokeWidth="1">
        <path d="M1648 664C1628 671 1617 688 1621.500 708" />
        <path d="M1648.500 815C1650 845 1680 862 1720 860L1905 841.500C1935 838 1961 822 1957 798L1941.500 729" />
      </g>

      {/* part coordinate system */}
      <path d="M1378 790 1413.500 787" stroke="#2dff2d" />
      <circle cx="1378" cy="790" r="2.500" fill="#2dff2d" />
      <path d="M1413.500 787v27" stroke="#45f3f3" />
      <circle cx="1413.500" cy="814" r="2" fill="#45f3f3" />
      <path d="m1414 787 5.500 23" stroke="#f33" />
      <circle cx="1419.500" cy="810" r="3" fill="#f33" />
    </svg>
  );
}

function Viewport() {
  return (
    <main className="relative min-w-0 flex-1 overflow-hidden bg-[#e8e9ed]">
      <div className="mt-[7px] ml-[42.9%] flex h-[46px] w-fit items-center gap-[2px] border border-[#a3a5a8] bg-[#f8f9fc] px-1">
        {VIEW_TOOLS.map((name) => (
          <button
            key={name}
            className={clsx(
              'flex size-9 items-center justify-center',
              (name === 'annotation' || name === 'spin') && 'border border-[#b3b5b8] bg-[#dddfe2]',
            )}
          >
            <Icon name={name} />
          </button>
        ))}
      </div>
      <LinkArm />
    </main>
  );
}

function MiniToolbar() {
  return (
    <div className="absolute top-[351px] left-[82px] border border-[#b0b2b4] bg-[#f9fafc] shadow-[3px_3px_2px_#8888]">
      <div className="flex h-10 items-center border-b border-[#dcdee0] pr-2">
        {['dim', 'sphereEdit', 'chain', 'sphereHide', 'selectTree'].map((name) => (
          <button
            key={name}
            className={clsx(
              'flex size-9 items-center justify-center',
              name === 'sphereEdit' && 'border border-[#7cc8f4] bg-[#cfefff]',
            )}
          >
            <Icon name={name} />
          </button>
        ))}
        <button className="ml-[5px] flex" aria-label="更多"><Caret /></button>
      </div>
      <div className="flex h-10 items-center border-b border-[#dcdee0]">
        <button className="flex size-9 items-center justify-center"><Icon name="patternSmall" /></button>
        <button className="flex size-9 items-center justify-center"><Icon name="mirror" /></button>
      </div>
      <div className="flex h-10 items-center">
        <button className="flex size-9 items-center justify-center"><Icon name="zoomSelect" /></button>
        <button className="flex size-9 items-center justify-center"><Icon name="arrowLeft" /></button>
      </div>
    </div>
  );
}

function Tooltip() {
  return (
    <div
      role="tooltip"
      className="absolute top-[400px] left-[135px] h-[95px] w-[227px] border border-[#b5d3dd] bg-white pt-4 pl-[18px] text-lg leading-6 text-[#222] shadow-[3px_3px_3px_#8888]"
    >
      <div className="flex items-center">
        <Icon name="sphereEdit" />
        <b className="ml-[10px]">编辑定义</b>
        <span className="ml-4">(Ctrl+E)</span>
      </div>
      <p className="mt-[10px]">编辑选定对象的定义。</p>
    </div>
  );
}

function Markup() {
  return (
    <div className="pointer-events-none text-[#ed1c24]">
      <div className="absolute top-[326px] left-[106px] h-[81px] w-[65px] rounded-xs border-6" />
      <div className="absolute top-[408px] left-[130px] h-[99px] w-[267px] rounded-xs border-6" />
      <div className="absolute top-[523px] left-[17px] h-[46px] w-[170px] rounded-xs border-6" />
      <div className="absolute top-[629px] left-[793px] h-[396px] w-[364px] rounded-xs border-6" />
      <span className="absolute top-[299px] left-[177px] text-8xl leading-[100px]">3</span>
      <span className="absolute top-[505px] left-[202px] text-8xl leading-[100px]">2</span>
      <span className="absolute top-[788px] left-[713px] text-8xl leading-[100px]">1</span>
      <span className="absolute top-[409px] left-[433px] text-[90px] leading-[100px] whitespace-nowrap">编辑定义</span>
    </div>
  );
}

export default function App() {
  return (
    <div className="relative flex min-h-screen overflow-hidden bg-[#e8e9ed] font-['Noto_Sans','Noto_Sans_CJK_SC',sans-serif] text-[#444]">
      <Gradients />
      <div className="w-[6px] shrink-0 border-l-2 border-[#b2b2b2] bg-[#9f9f9f]" />
      <div className="flex min-w-0 flex-1 flex-col">
        <TitleBar />
        <nav className="flex h-[41px] bg-[#3e4647] text-xl text-white">
          <button className="w-[100px] bg-linear-to-br from-[#62cf3f] to-[#55a630]">文件</button>
          {TABS.map((tab) => (
            <button
              key={tab}
              className={clsx('pr-[34px] pl-[33px] whitespace-nowrap', tab === '模型' && 'bg-[#f8f9fc] text-[#45852a]')}
            >
              {tab}
            </button>
          ))}
        </nav>
        <Ribbon />
        <div className="flex flex-1">
          <Sidebar />
          <Viewport />
        </div>
      </div>
      <MiniToolbar />
      <Tooltip />
      <Markup />
    </div>
  );
}
